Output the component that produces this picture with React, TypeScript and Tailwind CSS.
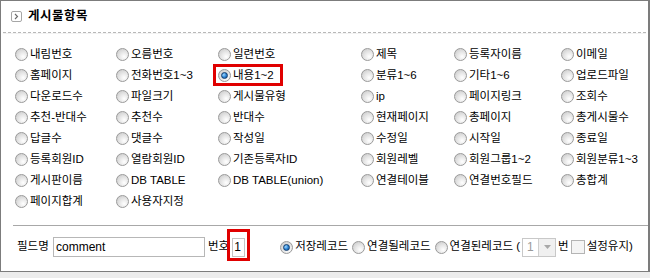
import React from 'react';

const rows: string[][] = [
  ['내림번호', '오름번호', '일련번호', '제목', '등록자이름', '이메일'],
  ['홈페이지', '전화번호1~3', '내용1~2', '분류1~6', '기타1~6', '업로드파일'],
  ['다운로드수', '파일크기', '게시물유형', 'ip', '페이지링크', '조회수'],
  ['추천-반대수', '추천수', '반대수', '현재페이지', '총페이지', '총게시물수'],
  ['답글수', '댓글수', '작성일', '수정일', '시작일', '종료일'],
  ['등록회원ID', '열람회원ID', '기존등록자ID', '회원레벨', '회원그룹1~2', '회원분류1~3'],
  ['게시판이름', 'DB TABLE', 'DB TABLE(union)', '연결테이블', '연결번호필드', '총합계'],
  ['페이지합계', '사용자지정'],
];

function Radio({ checked = false }: { checked?: boolean }) {
  return (
    <span className="relative inline-flex w-[13px] h-[13px] shrink-0 rounded-full border border-[#9a9a9a] bg-[radial-gradient(circle_at_65%_70%,#ffffff_0%,#e6e6e6_45%,#c4c4c4_100%)] items-center justify-center">
      {checked && (
        <span className="block w-[7px] h-[7px] rounded-full border border-[#123d6e] bg-[radial-gradient(circle_at_35%_35%,#9fd8ff_0%,#2f86d6_50%,#0e4b8c_100%)]" />
      )}
    </span>
  );
}

function Item({ label, checked = false }: { label: string; checked?: boolean }) {
  return (
    <div className="relative flex items-center gap-[2px] h-[21px]">
      <Radio checked={checked} />
      <span className="whitespace-nowrap">{label}</span>
      {checked && (
        <span className="absolute -left-[5px] -top-[1px] w-[70px] h-[22px] border-[3px] border-[#e00000]" />
      )}
    </div>
  );
}

export default function App() {
  return (
    <div
      className="w-[650px] h-[278px] bg-[#ececec] text-[11.5px] text-black leading-none"
      style={{ fontFamily: '"Liberation Sans", "Noto Sans CJK KR", sans-serif' }}
    >
      <div className="h-[272px] bg-white border-l border-t border-r-2 border-b border-[#7c7c7c] flex flex-col">
        {/* header */}
        <div className="h-[31px] flex items-center pl-[10px] gap-[6px]">
          <span className="w-[11px] h-[11px] border border-[#a6a6a6] rounded-[2px] flex items-center justify-center bg-white">
            <svg width="5" height="7" viewBox="0 0 5 7">
              <path d="M1 1 L3.5 3.5 L1 6" fill="none" stroke="#6a6a6a" strokeWidth="1.1" />
            </svg>
          </span>
          <span className="font-bold text-[12.5px] tracking-[0.5px]">게시물항목</span>
        </div>
        <div className="mx-[2px] h-px bg-[repeating-linear-gradient(90deg,#b8b8b8_0px,#b8b8b8_3px,transparent_3px,transparent_5px)]" />
        <div className="mx-[2px] h-px bg-[#f2f2f2]" />

        {/* items */}
        <div className="mt-[10px] pl-[14px] grid grid-cols-[101px_102px_143px_93px_107px_1fr]">
          {rows.map((row, ri) =>
            row.map((label, ci) => (
              <Item key={`${ri}-${ci}`} label={label} checked={ri === 1 && ci === 2} />
            ))
          )}
          <div className="col-span-4 h-0" />
        </div>

        <div className="mt-[13px] ml-[12px] h-px bg-[#a8a8a8]" />

        {/* bottom row */}
        <div className="mt-[11px] h-[20px] flex items-center pl-[16px]">
          <span className="w-[36px] whitespace-nowrap">필드명</span>
          <div className="w-[152px] h-[20px] border border-[#b7b7b7] flex items-center pl-[2px] text-[12px]">comment</div>
          <span className="ml-[3px] whitespace-nowrap">번호</span>
          <div className="relative ml-[3px]">
            <div className="w-[13px] h-[19px] border border-[#c4c4c4] flex items-center pl-[1px] text-[12px]">1</div>
            <span className="absolute -left-[5px] -top-[9px] w-[23px] h-[32px] border-[3px] border-[#e00000]" />
          </div>
          <div className="ml-[35px] flex items-center gap-[2px]">
            <Radio checked />
            <span className="whitespace-nowrap">저장레코드</span>
          </div>
          <div className="ml-[4px] flex items-center gap-[2px]">
            <Radio />
            <span className="whitespace-nowrap">연결될레코드</span>
          </div>
          <div className="ml-[4px] flex items-center gap-[2px]">
            <Radio />
            <span className="whitespace-nowrap">연결된레코드 (</span>
          </div>
          <div className="ml-[2px] w-[34px] h-[19px] border border-[#c8c8c8] flex items-center">
            <span className="flex-1 pl-[4px] text-[#9a9a9a] text-[12px]">1</span>
            <span className="w-[17px] h-full border-l border-[#cfcfcf] bg-[#f0f0f0] flex items-center justify-center">
              <svg width="7" height="4" viewBox="0 0 7 4">
                <path d="M0 0 L7 0 L3.5 4 Z" fill="#a8a8a8" />
              </svg>
            </span>
          </div>
          <span className="ml-[2px] whitespace-nowrap">번</span>
          <span className="ml-[2px] w-[14px] h-[14px] border border-[#b4b4b4] bg-[#f4f4f4]" />
          <span className="ml-[2px] whitespace-nowrap">설정유지)</span>
        </div>
      </div>
    </div>
  );
}
